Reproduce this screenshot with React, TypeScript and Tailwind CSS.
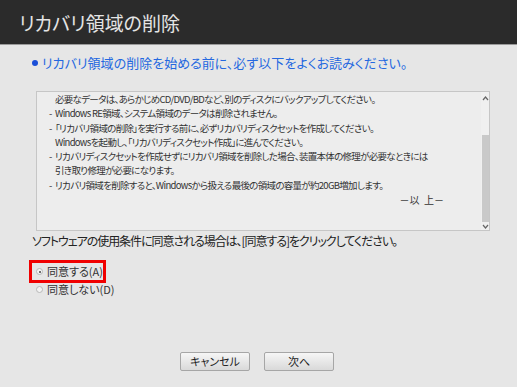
import React from "react";

const font = { fontFamily: '"Noto Sans CJK JP", "Noto Sans", sans-serif', fontFeatureSettings: '"palt"' };

function Radio({ checked }: { checked?: boolean }) {
  return (
    <span className="relative inline-block w-[7px] h-[7px] rounded-full border border-[#b8b8b8] bg-[#f4f4f4] mr-[4px]">
      {checked && <span className="absolute left-[1.5px] top-[1.5px] w-[2px] h-[2px] rounded-full bg-[#444]" />}
    </span>
  );
}

export default function App() {
  const lines: { dash: boolean; text: string }[] = [
    { dash: false, text: "必要なデータは、あらかじめCD/DVD/BDなど、別のディスクにバックアップしてください。" },
    { dash: true, text: "Windows RE領域、システム領域のデータは削除されません。" },
    { dash: true, text: "「リカバリ領域の削除」を実行する前に、必ずリカバリディスクセットを作成してください。" },
    { dash: false, text: "Windowsを起動し、「リカバリディスクセット作成」に進んでください。" },
    { dash: true, text: "リカバリディスクセットを作成せずにリカバリ領域を削除した場合、装置本体の修理が必要なときには" },
    { dash: false, text: "引き取り修理が必要になります。" },
    { dash: true, text: "リカバリ領域を削除すると、Windowsから扱える最後の領域の容量が約20GB増加します。" },
  ];
  return (
    <div className="w-[517px] h-[387px] bg-[#e6e6e6] flex flex-col overflow-hidden" style={font}>
      <div className="h-[45px] shrink-0 bg-[#2b2b2b] border-b border-[#9a9a9a] flex items-center pl-[19px]">
        <span className="text-[19px] text-[#e4e4e4] leading-none">リカバリ領域の削除</span>
      </div>
      <div className="mt-[10px] h-[16px] pl-[32px] flex items-center text-[13px] leading-[16px] text-[#2468e0]">
        <span className="inline-block w-[6px] h-[6px] rounded-full bg-[#1a4fd8] mr-[4px]" />
        <span>リカバリ領域の削除を始める前に、必ず以下をよくお読みください。</span>
      </div>
      <div className="mt-[20px] ml-[36px] w-[454px] h-[140px] shrink-0 bg-[#ededed] border border-[#c6c6c6] flex">
        <div className="flex-1 min-w-0 overflow-hidden pl-[12px] text-[9.5px] tracking-[-0.7px] leading-[14.3px] text-[#333]">
          {lines.map((l, i) => (
            <div key={i} className="flex whitespace-nowrap">
              <span className="w-[6px] shrink-0">{l.dash ? "-" : ""}</span>
              <span>{l.text}</span>
            </div>
          ))}
          <div className="flex justify-end pr-[37px] pt-[1px] tracking-[0px] text-[10px]">
            <span>－以&nbsp;&nbsp;上－</span>
          </div>
        </div>
        <div className="w-[8px] shrink-0 bg-[#f0f0f0] flex flex-col items-center">
          <svg width="7" height="7" viewBox="0 0 7 7" className="mt-[3px]">
            <path d="M1 5 L3.5 2 L6 5" fill="none" stroke="#666" strokeWidth="1.2" />
          </svg>
          <div className="w-[7px] bg-[#c9c9c9] mt-[33px] h-[87px]" />
          <svg width="7" height="7" viewBox="0 0 7 7" className="mt-[1px]">
            <path d="M1 2 L3.5 5 L6 2" fill="none" stroke="#666" strokeWidth="1.2" />
          </svg>
        </div>
      </div>
      <div className="mt-[2px] pl-[32px] h-[16px] text-[12px] tracking-[-1.05px] leading-[16px] text-[#222] whitespace-nowrap">
        ソフトウェアの使用条件に同意される場合は、[同意する]をクリックしてください。
      </div>
      <div className="mt-[11px] ml-[29px] w-[77px] h-[23px] border-[3px] border-[#f00000] flex items-center pl-[4px] text-[11px] text-[#333]">
        <Radio checked />
        <span>同意する(A)</span>
      </div>
      <div className="ml-[32px] -mt-[1px] h-[14px] flex items-center pl-[4px] text-[11px] text-[#333]">
        <Radio />
        <span>同意しない(D)</span>
      </div>
      <div className="mt-[56px] flex pl-[180px] gap-[14px]">
        <button className="w-[70px] h-[19px] rounded-[2px] border border-[#a6a6a6] bg-gradient-to-b from-[#f6f6f6] to-[#d9d9d9] text-[11px] leading-none text-[#222]">
          キャンセル
        </button>
        <button className="w-[70px] h-[19px] rounded-[2px] border border-[#a6a6a6] bg-gradient-to-b from-[#f6f6f6] to-[#d9d9d9] text-[11px] leading-none text-[#222]">
          次へ
        </button>
      </div>
    </div>
  );
}
